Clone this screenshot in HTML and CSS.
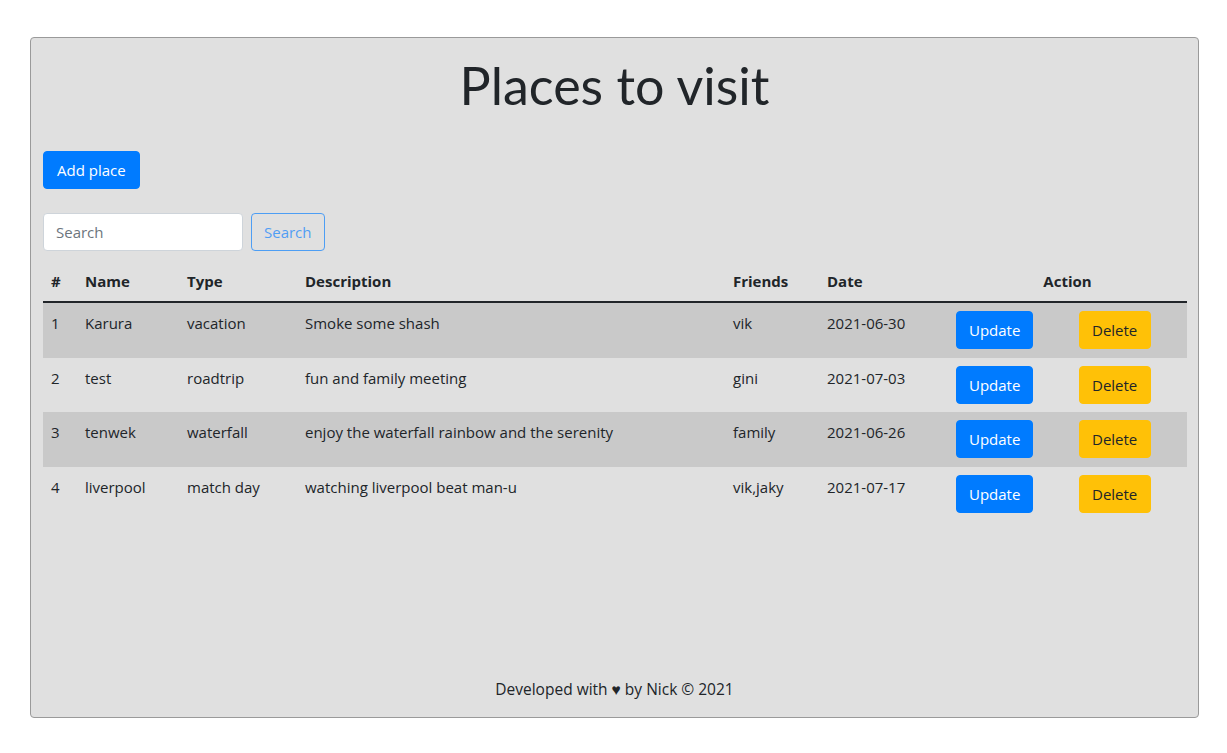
FILE: index.html
```html
<!DOCTYPE html>
<html lang="en">
<head>
<meta charset="utf-8">
<title>Places to visit</title>
<link rel="stylesheet" href="styles.css">
</head>
<body>
<div class="card">
  <h1 class="title">Places to visit</h1>
  <div class="toolbar">
    <button class="btn btn-primary btn-add">Add place</button>
  </div>
  <form class="search">
    <input class="search-input" type="text" placeholder="Search">
    <button class="btn btn-outline" type="button">Search</button>
  </form>
  <table class="places">
    <colgroup>
      <col class="c-num"><col class="c-name"><col class="c-type"><col class="c-desc">
      <col class="c-friends"><col class="c-date"><col class="c-upd"><col class="c-del">
    </colgroup>
    <thead>
      <tr><th>#</th><th>Name</th><th>Type</th><th>Description</th><th>Friends</th><th>Date</th><th colspan="2" class="action">Action</th></tr>
    </thead>
    <tbody>
      <tr class="odd"><td>1</td><td>Karura</td><td>vacation</td><td>Smoke some shash</td><td>vik</td><td>2021-06-30</td><td><button class="btn btn-primary">Update</button></td><td><button class="btn btn-warning">Delete</button></td></tr>
      <tr><td>2</td><td>test</td><td>roadtrip</td><td>fun and family meeting</td><td>gini</td><td>2021-07-03</td><td><button class="btn btn-primary">Update</button></td><td><button class="btn btn-warning">Delete</button></td></tr>
      <tr class="odd"><td>3</td><td>tenwek</td><td>waterfall</td><td>enjoy the waterfall rainbow and the serenity</td><td>family</td><td>2021-06-26</td><td><button class="btn btn-primary">Update</button></td><td><button class="btn btn-warning">Delete</button></td></tr>
      <tr><td>4</td><td>liverpool</td><td>match day</td><td>watching liverpool beat man-u</td><td>vik,jaky</td><td>2021-07-17</td><td><button class="btn btn-primary">Update</button></td><td><button class="btn btn-warning">Delete</button></td></tr>
    </tbody>
  </table>
  <footer class="footer">Developed with &#9829; by Nick &copy; 2021</footer>
</div>
</body>
</html>
```
FILE: styles.css
```css
* { box-sizing: border-box; }
html, body { margin: 0; padding: 0; background: #fff; }
body {
  font-family: "Open Sans", "Noto Sans", sans-serif;
  font-size: 15px;
  line-height: 24px;
  color: #212529;
}
.card {
  margin: 37px 28px 0 30px;
  height: 681px;
  background: #e0e0e0;
  border: 1px solid #9a9a9a;
  border-radius: 4px;
  padding: 0 12px;
  display: flex;
  flex-direction: column;
}
.title {
  margin: 18px 0 0;
  text-align: center;
  font-family: "Lato", sans-serif;
  font-weight: 400;
  font-size: 52px;
  line-height: 58px;
  color: #212529;
}
.toolbar { margin-top: 37px; display: flex; }
.btn {
  font-family: inherit;
  font-size: 15px;
  line-height: 24px;
  padding: 6px 12px;
  border: 1px solid transparent;
  border-radius: 4px;
  cursor: pointer;
}
.btn-add { padding: 6px 13px; }
.btn-primary { background: #007bff; color: #fff; border-color: #007bff; }
.btn-warning { background: #ffc107; color: #212529; border-color: #ffc107; padding: 6px 13px 6px 12px; }
.btn-outline { background: transparent; color: #007bff; border-color: #007bff; opacity: .65; }
.search { margin: 24px 0 0; display: flex; gap: 8px; }
.search-input {
  width: 200px;
  height: 38px;
  padding: 6px 12px;
  font-family: inherit;
  font-size: 15px;
  border: 1px solid #ced4da;
  border-radius: 4px;
  background: #fff;
  color: #495057;
}
.search-input::placeholder { color: #6c757d; }
.places {
  margin-top: 10px;
  width: 1144px;
  border-collapse: collapse;
  table-layout: fixed;
}
.c-num { width: 34px; } .c-name { width: 102px; } .c-type { width: 118px; } .c-desc { width: 428px; }
.c-friends { width: 94px; } .c-date { width: 129px; } .c-upd { width: 123px; } .c-del { width: 116px; }
.places th, .places td {
  padding: 8px;
  text-align: left;
  vertical-align: top;
}
.places th { font-weight: 700; border-bottom: 2px solid #212529; }
.places th.action { text-align: center; }
.places td { padding-bottom: 8.7px; }
.places tr.odd td { background: #c9c9c9; }
.footer {
  margin-top: auto;
  margin-bottom: 16px;
  text-align: center;
  font-size: 15.5px;
}
```
